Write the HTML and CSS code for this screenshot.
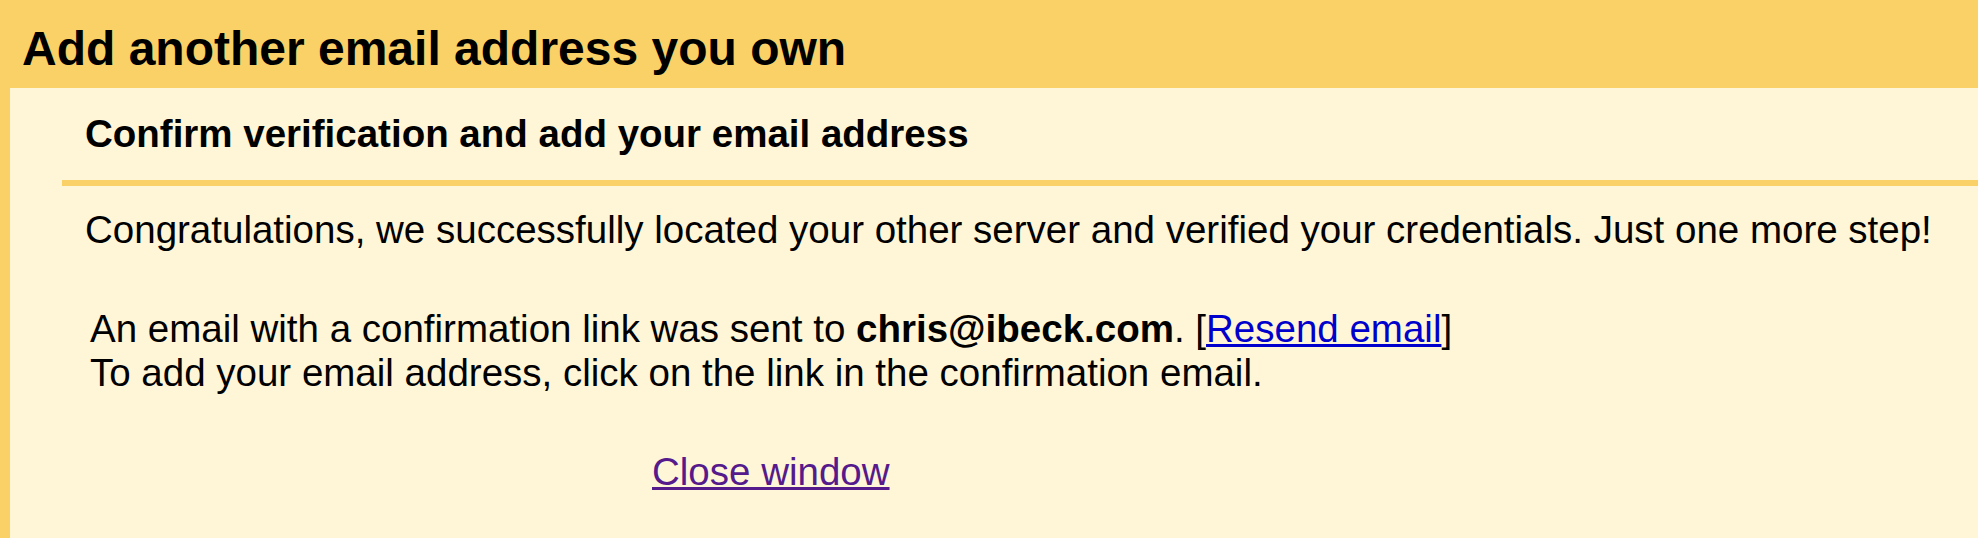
FILE: index.html
```html
<!DOCTYPE html>
<html lang="en">
<head>
<meta charset="utf-8">
<title>Add another email address you own</title>
<link rel="stylesheet" href="styles.css">
</head>
<body>
<div class="page">
  <header class="header">
    <h1 class="title">Add another email address you own</h1>
  </header>
  <main class="panel">
    <div class="panel-inner">
      <h2 class="subhead">Confirm verification and add your email address</h2>
      <div class="content">
        <p class="congrats">Congratulations, we successfully located your other server and verified your credentials. Just one more step!</p>
        <p class="sent">An email with a confirmation link was sent to <b>chris@ibeck.com</b>. [<a class="link" href="#">Resend email</a>]<br>To add your email address, click on the link in the confirmation email.</p>
        <p class="close"><a class="link visited" href="#">Close window</a></p>
      </div>
    </div>
  </main>
</div>
</body>
</html>
```
FILE: styles.css
```css
html, body {
  margin: 0;
  padding: 0;
  height: 100%;
}
body {
  background: #f9d166;
  font-family: "Liberation Sans", Arial, sans-serif;
  color: #000;
  overflow: hidden;
}
.page {
  display: flex;
  flex-direction: column;
  height: 100%;
}
.header {
  height: 88px;
  box-sizing: border-box;
  padding: 21px 0 0 22px;
}
.title {
  margin: 0;
  font-size: 48px;
  font-weight: bold;
  line-height: 55px;
}
.panel {
  flex: 1;
  margin-left: 10px;
  background: #fff6d8;
}
.panel-inner {
  padding-left: 52px;
}
.subhead {
  margin: 0;
  padding: 24px 0 24px 23px;
  font-size: 38.5px;
  font-weight: bold;
  line-height: 44px;
  border-bottom: 6px solid #f9d166;
}
.content {
  padding-left: 23px;
  font-size: 38.5px;
  line-height: 44px;
}
.congrats {
  margin: 22px 0 0 0;
}
.sent {
  margin: 55px 0 0 5px;
}
.close {
  margin: 55px 0 0 567px;
}
.link {
  color: #0000cc;
  text-decoration: underline;
}
.link.visited {
  color: #551a8b;
}
```
